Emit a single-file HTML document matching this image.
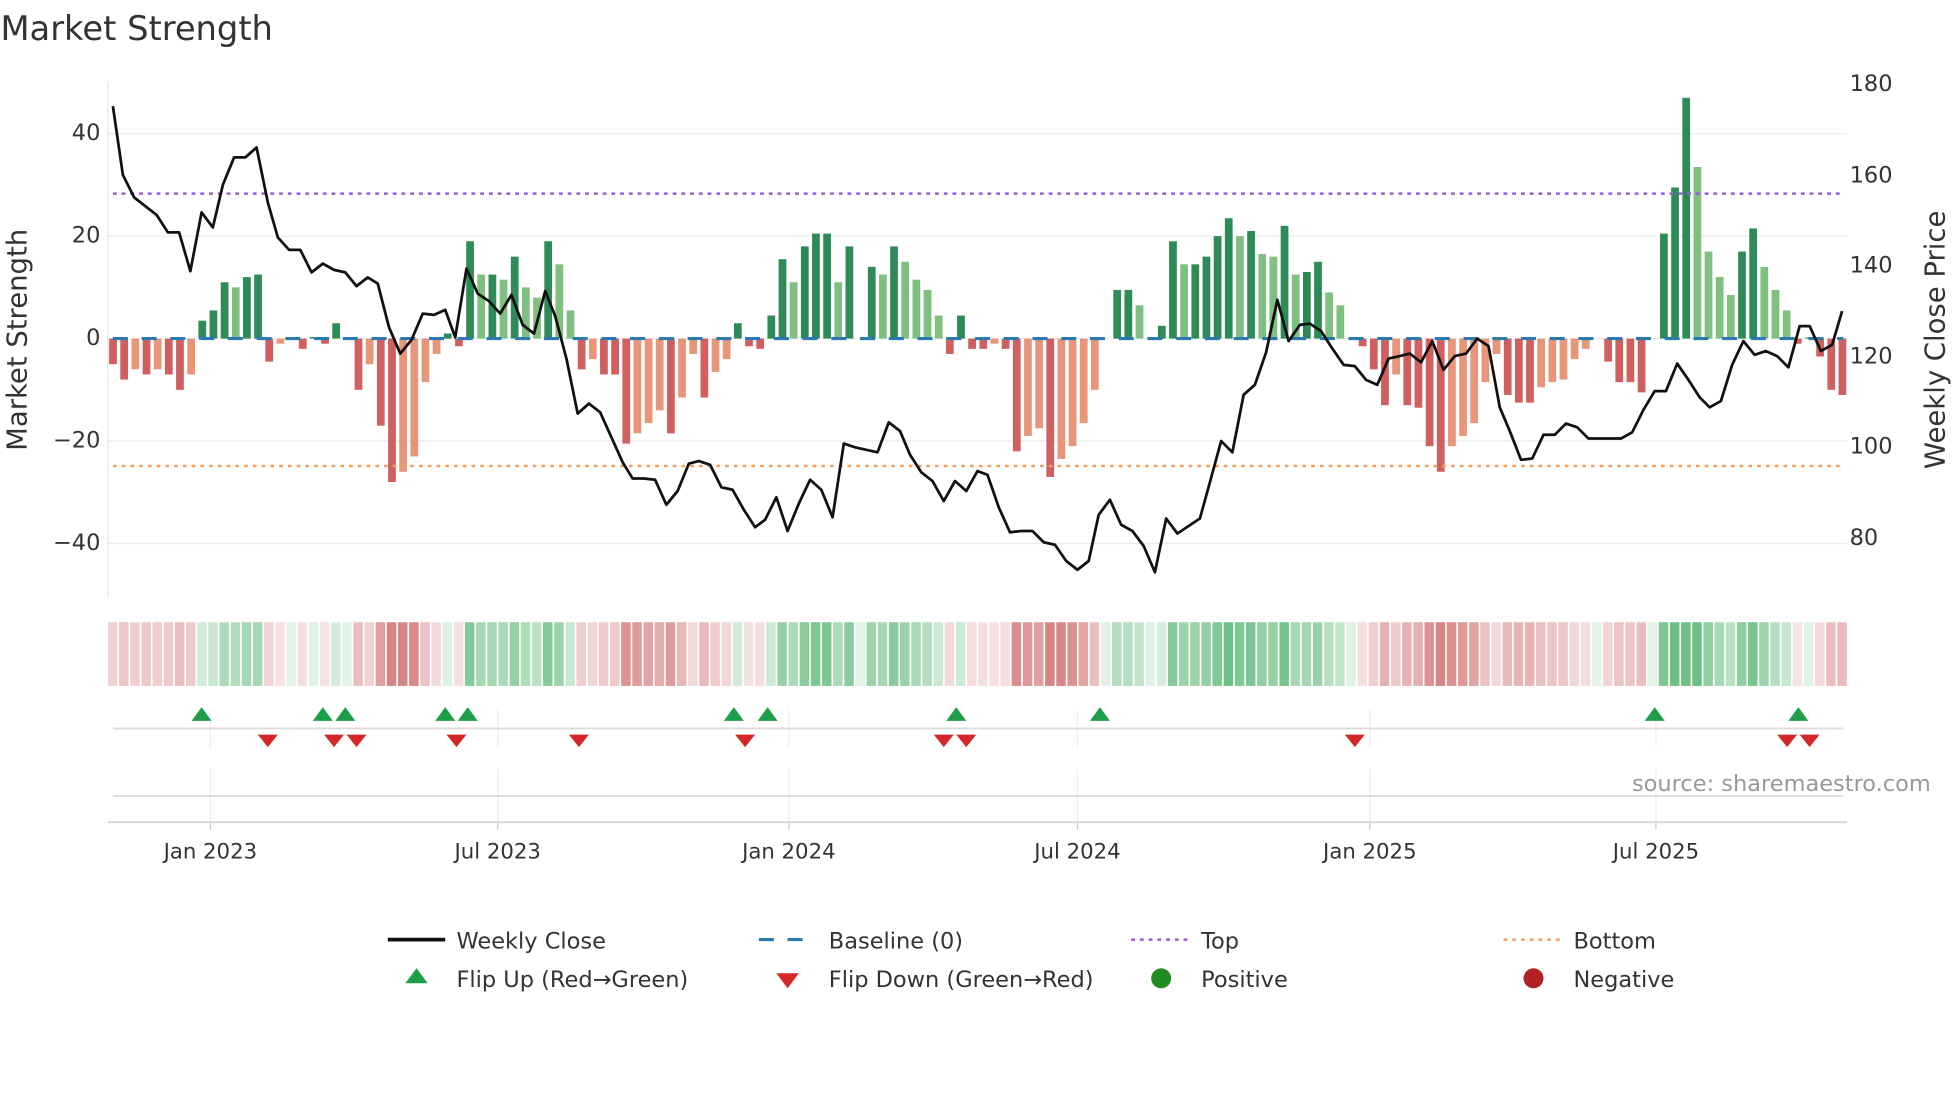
<!DOCTYPE html>
<html><head><meta charset="utf-8"><style>
html,body{margin:0;padding:0;background:#fff;}
svg{display:block;font-family:"DejaVu Sans","Liberation Sans",sans-serif;}
</style></head><body>
<svg id="s" width="1960" height="1102" viewBox="0 0 1568 882" xmlns="http://www.w3.org/2000/svg">
<rect width="1568" height="882" fill="#fff"/>
<text x="0" y="32" font-size="27" fill="#333">Market Strength</text>
<g id="grid"></g>
<g id="bars"></g>
<g id="heat"></g>
<g id="marks"></g>
<g id="txt" fill="#333" font-size="18"></g>
</svg>
<script>
var NS="http://www.w3.org/2000/svg";
function el(p,t,a,txt){var e=document.createElementNS(NS,t);for(var k in a)e.setAttribute(k,a[k]);if(txt!=null)e.textContent=txt;document.getElementById(p).appendChild(e);return e;}
var V=[-5,-8,-6,-7,-6,-7,-10,-7,3.5,5.5,11,10,12,12.5,-4.5,-1,0,-2,0.3,-1,3,0,-10,-5,-17,-28,-26,-23,-8.5,-3,1,-1.5,19,12.5,12.5,11.5,16,10,8,19,14.5,5.5,-6,-4,-7,-7,-20.5,-18.5,-16.5,-14,-18.5,-11.5,-3,-11.5,-6.5,-4,3,-1.5,-2,4.5,15.5,11,18,20.5,20.5,11,18,0,14,12.5,18,15,11.5,9.5,4.5,-3,4.5,-2,-2,-1,-2,-22,-19,-17.5,-27,-23.5,-21,-16.5,-10,0,9.5,9.5,6.5,0,2.5,19,14.5,14.5,16,20,23.5,20,21,16.5,16,22,12.5,13,15,9,6.5,0.2,-1.5,-6,-13,-7,-13,-13.5,-21,-26,-21,-19,-16.5,-8.5,-3,-11,-12.5,-12.5,-9.5,-8.5,-8,-4,-2,0,-4.5,-8.5,-8.5,-10.5,0,20.5,29.5,47,33.5,17,12,8.5,17,21.5,14,9.5,5.5,-1,0.2,-3.5,-10,-11];
var P=[[90,85],[98,140],[107,158],[116,165],[125,172],[134,186],[143,186],[152,217],[161,170],[170,182],[178,148],[187,126],[196,126],[205,118],[214,162],[222,190],[231,200],[240,200],[249,218],[258,211],[267,216],[276,218],[285,229],[294,222],[302,227],[311,262],[320,283],[329,272],[338,251],[347,252],[356,248],[364,270],[373,215],[382,235],[391,241],[400,251],[409,236],[418,260],[427,267],[436,233],[444,253],[453,287],[462,331],[471,323],[480,330],[489,350],[498,370],[506,383],[515,383],[524,384],[533,404],[542,393],[551,371],[559,369],[568,372],[577,390],[586,392],[595,408],[604,422],[612,416],[621,398],[630,425],[639,403],[648,384],[657,392],[666,414],[675,355],[684,358],[693,360],[702,362],[711,338],[720,345],[728,364],[737,378],[746,385],[755,401],[764,385],[773,393],[782,377],[790,380],[799,406],[808,426],[817,425],[826,425],[835,434],[844,436],[853,449],[862,456],[871,449],[879,412],[888,400],[897,420],[906,425],[915,437],[924,458],[933,415],[942,427],[951,421],[960,415],[968,386],[977,353],[986,362],[995,316],[1004,308],[1013,282],[1022,240],[1031,273],[1040,260],[1048,259],[1057,265],[1066,279],[1075,292],[1084,293],[1093,304],[1102,308],[1111,287],[1120,285],[1128,283],[1137,290],[1146,273],[1155,296],[1164,285],[1173,283],[1182,271],[1191,277],[1200,326],[1208,345],[1217,368],[1226,367],[1235,348],[1244,348],[1253,339],[1262,342],[1271,351],[1280,351],[1288,351],[1297,351],[1306,346],[1315,328],[1324,313],[1333,313],[1342,291],[1351,304],[1360,318],[1368,326],[1377,321],[1386,292],[1395,273],[1404,284],[1413,281],[1422,285],[1431,294],[1440,261],[1448,261],[1457,281],[1466,276],[1474,249]];
[107,189,271,353,435].forEach(function(y){el("grid","line",{x1:86,x2:1478,y1:y,y2:y,stroke:"#ebebeb","stroke-width":1});});
el("grid","line",{x1:86,x2:86,y1:65,y2:478,stroke:"#e6e6e6"});
var ticks=[[168,"Jan 2023"],[398,"Jul 2023"],[631,"Jan 2024"],[862,"Jul 2024"],[1096,"Jan 2025"],[1325,"Jul 2025"]];
ticks.forEach(function(t){el("grid","line",{x1:t[0],x2:t[0],y1:568,y2:598,stroke:"#eee"});el("grid","line",{x1:t[0],x2:t[0],y1:615,y2:658,stroke:"#eee"});el("grid","line",{x1:t[0],x2:t[0],y1:658,y2:664,stroke:"#ccc"});el("txt","text",{x:t[0],y:687,"text-anchor":"middle","font-size":17},t[1]);});
el("grid","line",{x1:90,x2:1475,y1:583,y2:583,stroke:"#ddd","stroke-width":1.5});
el("grid","line",{x1:90,x2:1475,y1:637,y2:637,stroke:"#ddd","stroke-width":1.5});
el("grid","line",{x1:86,x2:1478,y1:658,y2:658,stroke:"#d5d5d5","stroke-width":1.5});
var prev=0;
V.forEach(function(v,i){var x=87+i*8.93;var y0=271;var h=v*4.1;var c;
 if(v>=0){c=(v>=prev)?"#2e8b57":"#7fbf7f";}else{c=(v<=prev)?"#d06060":"#e8967a";}
 if(Math.abs(h)>0.3)el("bars","rect",{x:x,y:h>0?y0-h:y0,width:6.2,height:Math.abs(h),fill:c});
 var a=Math.min(1,0.2+Math.abs(v)/30);var hc=v>=0?"rgba(60,170,90,"+(a*0.75)+")":"rgba(200,80,80,"+(a*0.7)+")";
 el("heat","rect",{x:x-1,y:498,width:7.6,height:51,fill:hc});
 prev=v;});
el("bars","line",{x1:90,x2:1475,y1:155,y2:155,stroke:"#9b59d6","stroke-width":2,"stroke-dasharray":"3,4"});
el("bars","line",{x1:90,x2:1475,y1:373,y2:373,stroke:"#f0a060","stroke-width":2,"stroke-dasharray":"3,4"});
el("bars","line",{x1:90,x2:1475,y1:271,y2:271,stroke:"#2a7ab0","stroke-width":2.5,"stroke-dasharray":"12,11"});
el("bars","polyline",{points:P.map(function(p){return p.join(",");}).join(" "),fill:"none",stroke:"#111","stroke-width":2.2,"stroke-linejoin":"round"});
[161,258,276,356,374,587,614,765,880,1324,1439].forEach(function(x){el("marks","path",{d:"M"+(x-8)+",577 L"+(x+8)+",577 L"+x+",566 Z",fill:"#1f9e4a"});});
[214,267,285,365,463,596,755,773,1084,1430,1448].forEach(function(x){el("marks","path",{d:"M"+(x-8)+",588 L"+(x+8)+",588 L"+x+",598 Z",fill:"#d62728"});});
[[40,112],[20,194],[0,276],["\u221220",358],["\u221240",440]].forEach(function(t){el("txt","text",{x:80,y:t[1],"text-anchor":"end"},t[0]);});
[[180,73],[160,146],[140,218],[120,291],[100,363],[80,436]].forEach(function(t){el("txt","text",{x:1480,y:t[1]},t[0]);});
el("txt","text",{transform:"translate(21,272) rotate(-90)","text-anchor":"middle","font-size":22},"Market Strength");
el("txt","text",{transform:"translate(1556,272) rotate(-90)","text-anchor":"middle","font-size":22},"Weekly Close Price");
el("txt","text",{x:1545,y:633,"text-anchor":"end",fill:"#999","font-size":18},"source: sharemaestro.com");
el("txt","line",{x1:310,x2:356,y1:752,y2:752,stroke:"#111","stroke-width":3});
el("txt","text",{x:365,y:759},"Weekly Close");
el("txt","line",{x1:607,x2:652,y1:752,y2:752,stroke:"#2a7ab0","stroke-width":2.5,"stroke-dasharray":"12,11"});
el("txt","text",{x:663,y:759},"Baseline (0)");
el("txt","line",{x1:905,x2:950,y1:752,y2:752,stroke:"#9b59d6","stroke-width":2,"stroke-dasharray":"3,4"});
el("txt","text",{x:961,y:759},"Top");
el("txt","line",{x1:1203,x2:1248,y1:752,y2:752,stroke:"#f0a060","stroke-width":2,"stroke-dasharray":"3,4"});
el("txt","text",{x:1259,y:759},"Bottom");
el("txt","path",{d:"M324,787 L342,787 L333,775 Z",fill:"#1f9e4a"});
el("txt","text",{x:365,y:790},"Flip Up (Red\u2192Green)");
el("txt","path",{d:"M621,779 L639,779 L630,791 Z",fill:"#d62728"});
el("txt","text",{x:663,y:790},"Flip Down (Green\u2192Red)");
el("txt","circle",{cx:929,cy:783,r:8,fill:"#228b22"});
el("txt","text",{x:961,y:790},"Positive");
el("txt","circle",{cx:1227,cy:783,r:8,fill:"#b22222"});
el("txt","text",{x:1259,y:790},"Negative");
</script>
</body></html>
